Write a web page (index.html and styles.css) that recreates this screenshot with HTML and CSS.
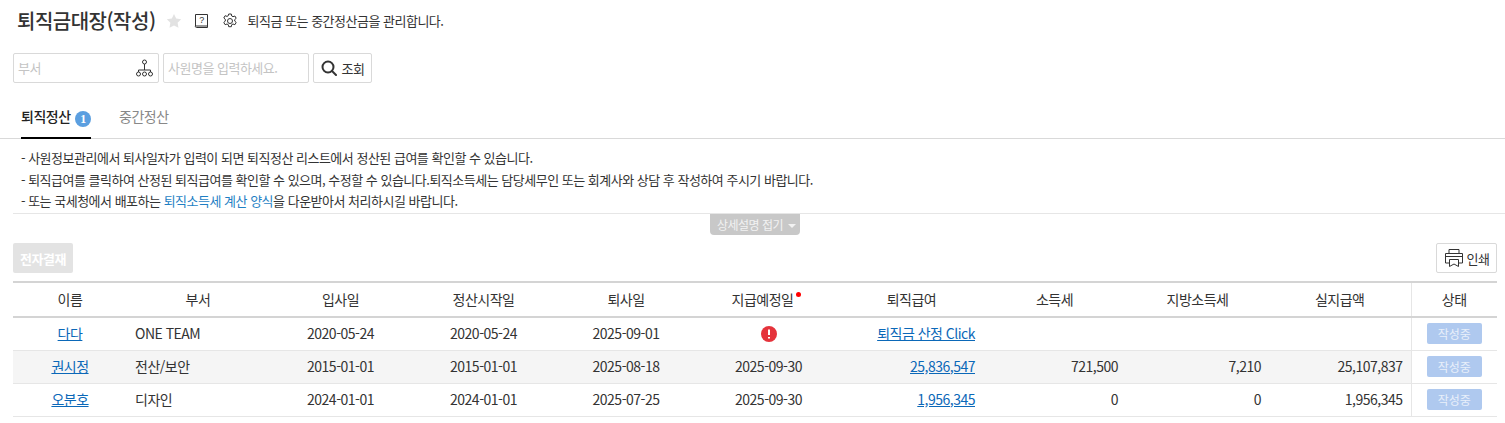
FILE: index.html
```html
<!DOCTYPE html>
<html lang="ko">
<head>
    <meta charset="UTF-8">
    <title>퇴직금대장(작성)</title>
    <link rel="stylesheet" href="styles.css">
</head>
<body>
    <header class="title-bar">
        <h1 class="page-title">퇴직금대장(작성)</h1>
        <svg class="icon-star" width="16" height="16" viewBox="0 0 16 16"><path fill="#e2e2e2" d="M8 1l2.2 4.6 5 .7-3.6 3.5.9 5L8 12.4l-4.5 2.4.9-5L.8 6.3l5-.7z"/></svg>
        <svg class="icon-help" width="15" height="16" viewBox="0 0 15 16" fill="none" stroke="#333"><path d="M1.500 13V1.500h12v13h-11a1 1 0 0 1-1-1.500h12"/><text x="7.500" y="10" font-size="9" font-family="Liberation Sans" text-anchor="middle" fill="#333" stroke="none">?</text></svg>
        <svg class="icon-gear" width="16" height="16" viewBox="0 0 16 16" fill="none" stroke="#333"><path d="M6.700 1h2.600l.4 2 1.300.7 1.900-.7 1.300 2.300-1.500 1.300v1.500l1.500 1.300-1.300 2.300-1.900-.7-1.300.7-.4 2H6.700l-.4-2-1.300-.7-1.900.7-1.300-2.300 1.500-1.300V6.300L1.800 5l1.300-2.300 1.900.7 1.300-.7z"/><circle cx="8" cy="8" r="2.500"/></svg>
        <p class="page-desc">퇴직금 또는 중간정산금을 관리합니다.</p>
    </header>

    <div class="search-bar">
        <div class="field">
            <span class="placeholder">부서</span>
            <svg width="17" height="18" viewBox="0 0 17 18" fill="none" stroke="#333"><circle cx="8.500" cy="3" r="2"/><path d="M8.500 5v6M2.500 13v-2h12v2"/><circle cx="2.500" cy="15" r="2"/><circle cx="8.500" cy="15" r="2"/><circle cx="14.500" cy="15" r="2"/></svg>
        </div>
        <div class="field">
            <span class="placeholder">사원명을 입력하세요.</span>
        </div>
        <button class="btn btn-search">
            <svg width="16" height="16" viewBox="0 0 16 16" fill="none" stroke="#333" stroke-width="2"><circle cx="7" cy="7" r="5.500"/><path d="M11 11l4 4" stroke-linecap="round"/></svg>
            조회
        </button>
    </div>

    <nav class="tabs">
        <a class="tab active">퇴직정산 <span class="tab-badge">1</span></a>
        <a class="tab">중간정산</a>
    </nav>

    <div class="notice">
        <p>- 사원정보관리에서 퇴사일자가 입력이 되면 퇴직정산 리스트에서 정산된 급여를 확인할 수 있습니다.</p>
        <p>- 퇴직급여를 클릭하여 산정된 퇴직급여를 확인할 수 있으며, 수정할 수 있습니다.퇴직소득세는 담당세무인 또는 회계사와 상담 후 작성하여 주시기 바랍니다.</p>
        <p>- 또는 국세청에서 배포하는 <a class="notice-link">퇴직소득세 계산 양식</a>을 다운받아서 처리하시길 바랍니다.</p>
    </div>
    <div class="notice-toggle">
        <span class="toggle-btn">상세설명 접기<i class="caret"></i></span>
    </div>

    <div class="toolbar">
        <button class="btn-approve">전자결재</button>
        <button class="btn btn-print">
            <svg width="20" height="20" viewBox="0 0 20 20" fill="none" stroke="#333"><path d="M5 5V1.500h10V5M5 15H1.500V5.500h17V15H15M1.500 8.500h17"/><path d="M5.500 11.500h9v7l-4.500-2.500-4.500 2.500z"/></svg>
            인쇄
        </button>
    </div>

    <table class="grid">
        <colgroup>
            <col class="col-name"><col class="col-narrow">
            <col class="col-wide"><col class="col-wide"><col class="col-narrow"><col class="col-wide">
            <col class="col-wide"><col class="col-wide"><col class="col-wide"><col class="col-narrow">
            <col class="col-state">
        </colgroup>
        <thead>
            <tr>
                <th>이름</th><th>부서</th><th>입사일</th><th>정산시작일</th><th>퇴사일</th>
                <th>지급예정일<i class="required"></i></th>
                <th>퇴직급여</th><th>소득세</th><th>지방소득세</th><th>실지급액</th><th class="state">상태</th>
            </tr>
        </thead>
        <tbody>
            <tr>
                <td class="center"><a>다다</a></td><td>ONE TEAM</td>
                <td class="center">2020-05-24</td><td class="center">2020-05-24</td><td class="center">2025-09-01</td>
                <td class="center"><svg class="icon-alert" width="16" height="16" viewBox="0 0 16 16"><circle cx="8" cy="8" r="8" fill="#e5333b"/><path d="M8 3.500v5.500M8 11v1.500" stroke="#fff" stroke-width="2"/></svg></td>
                <td class="right"><a>퇴직금 산정 Click</a></td><td></td><td></td><td></td>
                <td class="state"><span class="badge">작성중</span></td>
            </tr>
            <tr class="odd">
                <td class="center"><a>권시정</a></td><td>전산/보안</td>
                <td class="center">2015-01-01</td><td class="center">2015-01-01</td><td class="center">2025-08-18</td>
                <td class="center">2025-09-30</td>
                <td class="right"><a>25,836,547</a></td><td class="right">721,500</td><td class="right">7,210</td><td class="right">25,107,837</td>
                <td class="state"><span class="badge">작성중</span></td>
            </tr>
            <tr>
                <td class="center"><a>오분호</a></td><td>디자인</td>
                <td class="center">2024-01-01</td><td class="center">2024-01-01</td><td class="center">2025-07-25</td>
                <td class="center">2025-09-30</td>
                <td class="right"><a>1,956,345</a></td><td class="right">0</td><td class="right">0</td><td class="right">1,956,345</td>
                <td class="state"><span class="badge">작성중</span></td>
            </tr>
        </tbody>
    </table>
</body>
</html>
```

FILE: styles.css
```css
* {
    box-sizing: border-box;
}

body {
    margin: 0;
    height: 423px;
    overflow: hidden;
    background: #fff;
    color: #333;
    font-family: "Noto Sans CJK KR", "Noto Sans", sans-serif;
    font-size: 14px;
    line-height: 20px;
    letter-spacing: -0.5px;
}

p {
    margin: 0;
}

.title-bar {
    display: flex;
    align-items: center;
    height: 42px;
    padding-left: 17px;
}

.page-title {
    margin: 0;
    font-size: 20px;
    font-weight: 500;
    line-height: 42px;
}

.icon-star {
    margin-left: 10px;
}

.icon-help {
    margin-left: 12px;
}

.icon-gear {
    margin-left: 13px;
}

.page-desc {
    margin-left: 10px;
    font-size: 13px;
}

.search-bar {
    display: flex;
    gap: 4px;
    height: 30px;
    margin: 11px 0 0 13px;
}

.field {
    display: flex;
    align-items: center;
    justify-content: space-between;
    width: 146px;
    padding: 0 5px 0 4px;
    border: 1px solid #d9d9d9;
    border-radius: 2px;
}

.placeholder {
    color: #c4c4c4;
    font-size: 13px;
}

.btn {
    display: inline-flex;
    align-items: center;
    justify-content: center;
    height: 30px;
    padding: 0;
    background: #fff;
    border: 1px solid #d9d9d9;
    border-radius: 2px;
    color: #333;
    font-family: inherit;
    font-size: 13px;
    letter-spacing: -0.5px;
}

.btn-search {
    gap: 5px;
    width: 59px;
}

.tabs {
    display: flex;
    height: 56px;
    padding: 18px 0 0 21px;
    border-bottom: 1px solid #d9d9d9;
}

.tab {
    display: block;
    height: 38px;
    margin-right: 28px;
    padding-top: 5px;
    color: #888;
    font-size: 14px;
}

.tab.active {
    width: 70px;
    margin-bottom: -1px;
    border-bottom: 2px solid #000;
    color: #222;
    font-weight: 500;
    white-space: nowrap;
}

.tab-badge {
    display: inline-block;
    width: 16px;
    height: 16px;
    margin-left: 1px;
    background: #5b9fe0;
    border-radius: 50%;
    color: #fff;
    font-family: "Liberation Serif", serif;
    font-size: 12px;
    font-weight: 700;
    line-height: 16px;
    text-align: center;
    vertical-align: -1px;
}

.notice {
    height: 75px;
    margin-left: 13px;
    padding: 8px 0 0 8px;
    border-bottom: 1px solid #e6e6e6;
    font-size: 13px;
    line-height: 21.500px;
}

.notice-link {
    color: #1f7fc4;
}

.notice-toggle {
    display: flex;
    justify-content: center;
    height: 29px;
    padding-left: 5px;
}

.toggle-btn {
    display: block;
    width: 90px;
    height: 21px;
    padding-left: 3px;
    background: #c8c8c8;
    border-radius: 0 0 4px 4px;
    color: #f2f2f2;
    font-size: 12px;
    line-height: 21px;
    text-align: center;
}

.caret {
    display: inline-block;
    margin-left: 5px;
    border: 4px solid transparent;
    border-top-color: #f2f2f2;
    border-bottom: 0;
    vertical-align: 2px;
}

.toolbar {
    display: flex;
    justify-content: space-between;
    height: 30px;
    margin: 0 8px 0 13px;
}

.btn-approve {
    width: 60px;
    padding: 0;
    background: #e3e3e3;
    border: 0;
    border-radius: 2px;
    color: #fff;
    font-family: inherit;
    font-size: 13px;
    font-weight: 700;
    letter-spacing: -0.5px;
}

.btn-print {
    gap: 3px;
    width: 61px;
}

.grid {
    width: 1484px;
    margin: 8px 0 0 13px;
    border-collapse: collapse;
    border-top: 2px solid #d4d4d4;
    table-layout: fixed;
    font-size: 14px;
}

.col-name {
    width: 114px;
}

.col-narrow {
    width: 142px;
}

.col-wide {
    width: 143px;
}

.col-state {
    width: 86px;
}

.grid th {
    height: 35px;
    padding: 0 0 2px;
    border-bottom: 2px solid #d4d4d4;
    color: #333;
    font-weight: 400;
}

.grid td {
    height: 33px;
    padding: 0 8px 2px;
    border-bottom: 1px solid #e6e6e6;
}

.grid th.state,
.grid td.state {
    border-left: 1px solid #e6e6e6;
    text-align: center;
}

.grid .odd td {
    background: #f5f5f5;
}

.grid .odd td.state {
    background: #fff;
}

.grid a {
    color: #0b68b8;
    text-decoration: underline;
}

.center {
    text-align: center;
}

.right {
    text-align: right;
}

.required {
    display: inline-block;
    width: 5px;
    height: 5px;
    margin: 0 4px 0 3px;
    background: #f00;
    border-radius: 50%;
    vertical-align: 8px;
}

.icon-alert {
    display: block;
    margin: 2px auto 0;
}

.badge {
    display: inline-block;
    width: 55px;
    height: 21px;
    background: #afc9ef;
    border-radius: 2px;
    color: #e8effa;
    font-size: 12px;
    letter-spacing: 0;
    line-height: 21px;
    vertical-align: middle;
}
```
